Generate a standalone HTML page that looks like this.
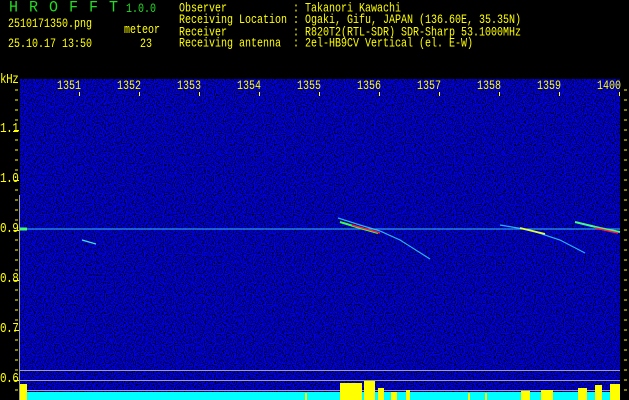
<!DOCTYPE html>
<html><head><meta charset="utf-8"><style>
html,body{margin:0;padding:0;background:#000;}
body{width:629px;height:400px;position:relative;overflow:hidden;font-family:"Liberation Mono","DejaVu Sans Mono",monospace;}
.t{position:absolute;color:#ffff00;font-size:10px;line-height:12px;white-space:pre;transform-origin:0 0;transform:scaleY(1.25);}
.g{color:#22dd22;}
.y{letter-spacing:-0.5px;font-size:11px}
</style></head><body>
<div class="t g" style="left:9px;top:0px;font-size:15px;line-height:15px;letter-spacing:11px;transform:scaleY(1.05)">HROFFT</div>
<div class="t g" style="left:126px;top:3px;font-size:10px">1.0.0</div>
<div class="t" style="left:8px;top:18px">2510171350.png</div>
<div class="t" style="left:124px;top:24px">meteor</div>
<div class="t" style="left:8px;top:38px">25.10.17 13:50</div>
<div class="t" style="left:140px;top:38px">23</div>
<div class="t" style="left:179px;top:4px;line-height:9.4px;letter-spacing:0px">Observer           : Takanori Kawachi
Receiving Location : Ogaki, Gifu, JAPAN (136.60E, 35.35N)
Receiver           : R820T2(RTL-SDR) SDR-Sharp 53.1000MHz
Receiving antenna  : 2el-HB9CV Vertical (el. E-W)</div>
<svg width="629" height="400" style="position:absolute;left:0;top:0" xmlns="http://www.w3.org/2000/svg">
<defs>
<filter id="n" x="0" y="0" width="100%" height="100%" color-interpolation-filters="sRGB">
<feTurbulence type="fractalNoise" baseFrequency="0.9" numOctaves="1" seed="3"/>
<feColorMatrix type="matrix" values="0 0 0 0 0  0 0 0 0 0  4.5 0 0 0 -1.5  0 0 0 0 1"/>
</filter>
</defs>
<rect x="20" y="79" width="600" height="321" fill="#000020"/>
<rect x="20" y="79" width="600" height="321" filter="url(#n)" opacity="0.95"/>
<line x1="20" y1="229" x2="620" y2="229" stroke="#30c0ff" stroke-width="1.2" opacity="0.8"/>
<line x1="20" y1="229" x2="27" y2="229" stroke="#40ff60" stroke-width="3"/>
<polyline points="338,218 360,225 380,231 400,240 430,259" fill="none" stroke="#30d0ff" stroke-width="1.2" opacity="0.85"/>
<polyline points="340,222 360,228 378,233" fill="none" stroke="#40ff40" stroke-width="2"/>
<polyline points="352,225 370,230 380,233" fill="none" stroke="#ff2040" stroke-width="1.5"/>
<polyline points="500,225 530,230 560,240 585,253" fill="none" stroke="#30d0ff" stroke-width="1.2" opacity="0.85"/>
<polyline points="520,228 545,234" fill="none" stroke="#e0ff40" stroke-width="1.8"/>
<polyline points="575,222 600,228 620,232" fill="none" stroke="#40ff80" stroke-width="2"/>
<polyline points="595,228 618,233" fill="none" stroke="#ff2040" stroke-width="1.5"/>
<line x1="82" y1="240" x2="96" y2="244" stroke="#40e0ff" stroke-width="1.2"/>
<line x1="20" y1="370.5" x2="620" y2="370.5" stroke="#a0a0a0"/>
<line x1="20" y1="380.5" x2="620" y2="380.5" stroke="#a0a0a0"/>
<line x1="20" y1="390.5" x2="620" y2="390.5" stroke="#a0a0a0"/>
<line x1="19.5" y1="195" x2="19.5" y2="400" stroke="#a0a0a0"/>
<rect x="27" y="392" width="593" height="8" fill="#00ffff"/>
<path d="M20 384h7v16h-7zM340 383h22v17h-22zM364 381h11v19h-11zM378 388h6v12h-6zM391 392h6v8h-6zM406 390h4v10h-4zM521 391h9v9h-9zM541 390h12v10h-12zM578 388h9v12h-9zM595 385h7v15h-7zM610 384h10v16h-10zM305 393h2v7h-2zM468 393h2v7h-2zM485 393h2v7h-2z" fill="#ffff00"/>
<g stroke="#ffff00">
<path d="M624 90h3M624 100h3M624 110h3M624 120h3M624 130h3M624 140h3M624 150h3M624 160h3M624 170h3M624 180h3M624 190h3M624 200h3M624 210h3M624 220h3M624 230h3M624 240h3M624 250h3M624 260h3M624 270h3M624 280h3M624 290h3M624 300h3M624 310h3M624 320h3M624 330h3M624 340h3M624 350h3M624 360h3M624 370h3M624 380h3M624 390h3"/>
<path d="M15 90h3M15 100h3M15 110h3M15 120h3M15 140h3M15 150h3M15 160h3M15 170h3M15 190h3M15 200h3M15 210h3M15 220h3M15 240h3M15 250h3M15 260h3M15 270h3M15 290h3M15 300h3M15 310h3M15 320h3M15 340h3M15 350h3M15 360h3M15 370h3M15 390h3"/>
<path d="M14 130.5h5M14 180.5h5M14 230.5h5M14 280.5h5M14 330.5h5M14 380.5h5"/>
<path d="M79.5 92v4M139.5 92v4M199.5 92v4M259.5 92v4M319.5 92v4M379.5 92v4M439.5 92v4M499.5 92v4M559.5 92v4M619.5 92v4"/>
</g>
</svg>
<div class="t y" style="left:0;top:73px">kHz</div>
<div class="t y" style="left:0;top:122px">1.1</div>
<div class="t y" style="left:0;top:172px">1.0</div>
<div class="t y" style="left:0;top:222px">0.9</div>
<div class="t y" style="left:0;top:272px">0.8</div>
<div class="t y" style="left:0;top:322px">0.7</div>
<div class="t y" style="left:0;top:372px">0.6</div>
<div class="t" style="left:57px;top:80px">1351</div>
<div class="t" style="left:117px;top:80px">1352</div>
<div class="t" style="left:177px;top:80px">1353</div>
<div class="t" style="left:237px;top:80px">1354</div>
<div class="t" style="left:297px;top:80px">1355</div>
<div class="t" style="left:357px;top:80px">1356</div>
<div class="t" style="left:417px;top:80px">1357</div>
<div class="t" style="left:477px;top:80px">1358</div>
<div class="t" style="left:537px;top:80px">1359</div>
<div class="t" style="left:597px;top:80px">1400</div>
</body></html>
